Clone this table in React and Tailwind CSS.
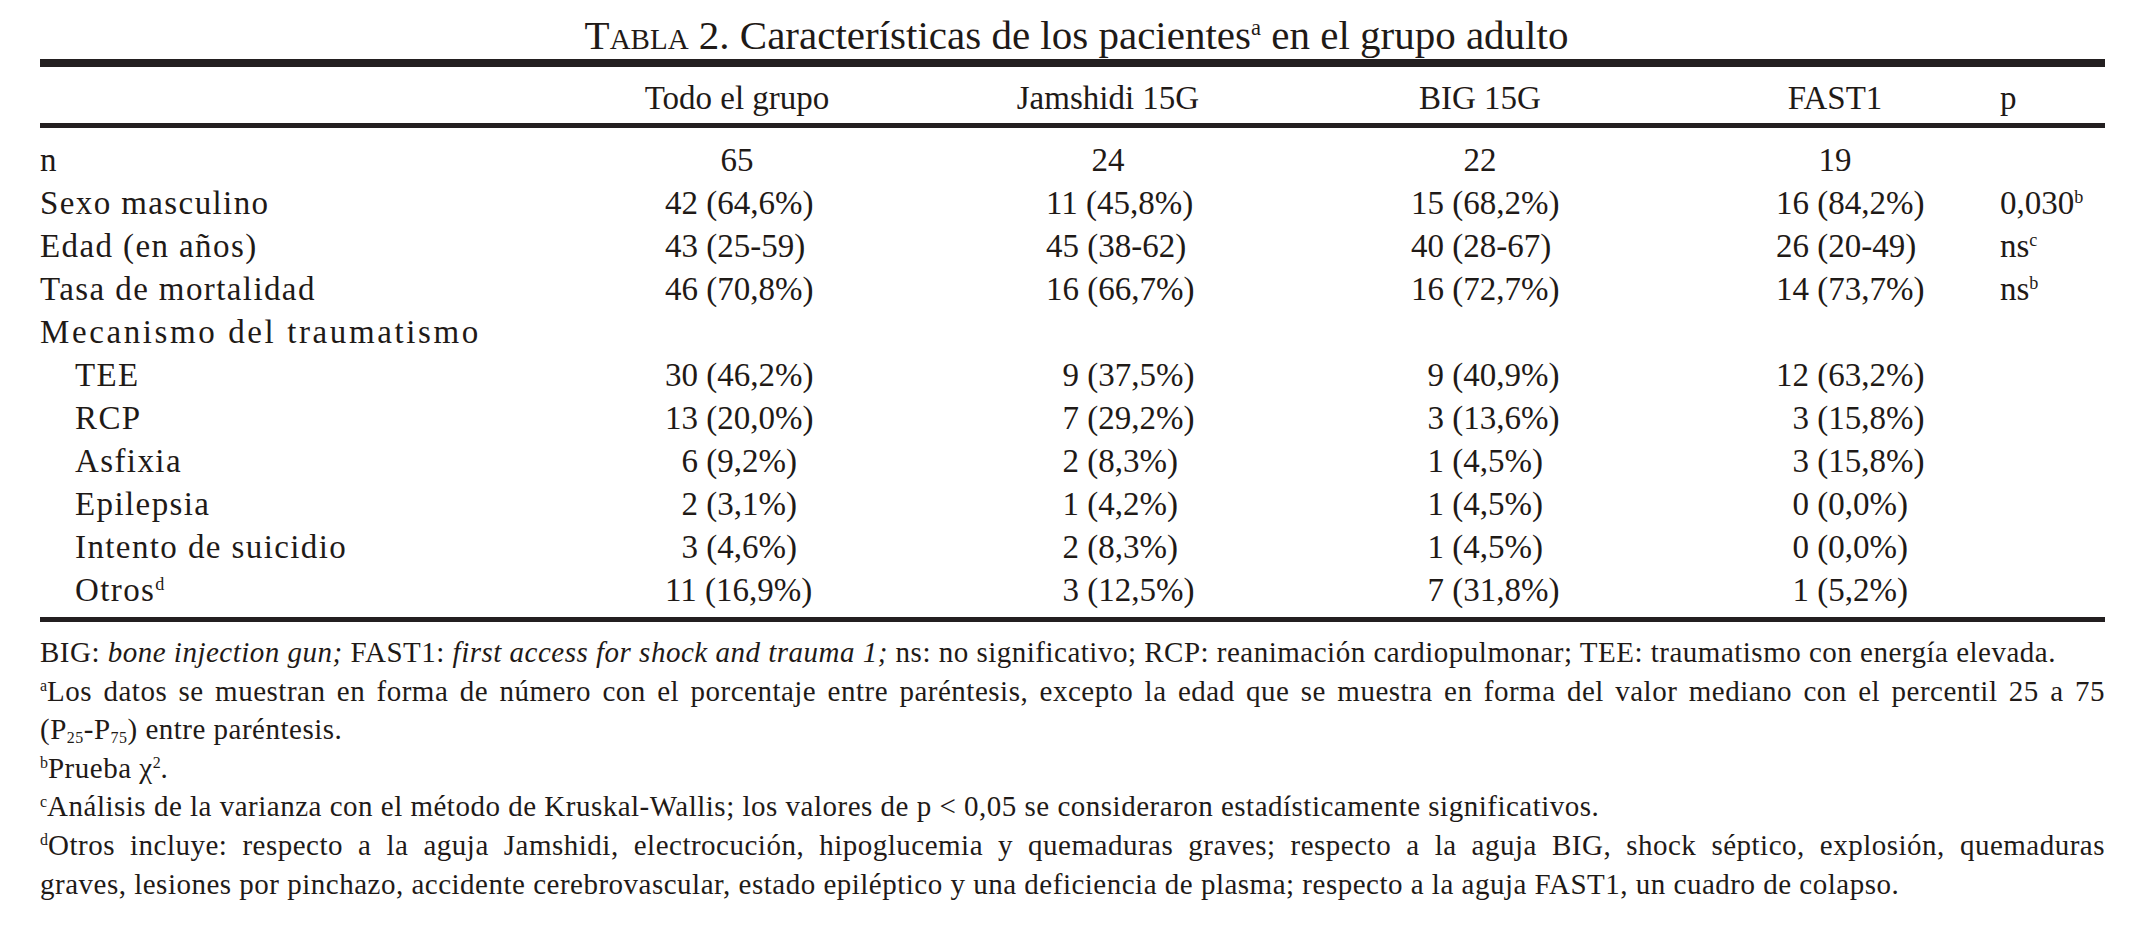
import React from "react";

const headCell = [
  "",
  "w-[234px] text-center",
  "w-[216px] text-center",
  "w-[220px] text-center",
  "w-[190px] text-center",
  "",
];

const dataCell = ["", "pl-[45px]", "pl-[46px]", "pl-[41px]", "pl-[36px]", ""];

const rows = [
  { label: "Sexo masculino", vals: ["42 (64,6%)", "11 (45,8%)", "15 (68,2%)", "16 (84,2%)"], p: "0,030", sup: "b" },
  { label: "Edad (en años)", vals: ["43 (25-59)", "45 (38-62)", "40 (28-67)", "26 (20-49)"], p: "ns", sup: "c" },
  { label: "Tasa de mortalidad", vals: ["46 (70,8%)", "16 (66,7%)", "16 (72,7%)", "14 (73,7%)"], p: "ns", sup: "b" },
  { label: "Mecanismo del traumatismo", wide: true, vals: [] },
  { label: "TEE", sub: true, vals: ["30 (46,2%)", "9 (37,5%)", "9 (40,9%)", "12 (63,2%)"] },
  { label: "RCP", sub: true, vals: ["13 (20,0%)", "7 (29,2%)", "3 (13,6%)", "3 (15,8%)"] },
  { label: "Asfixia", sub: true, vals: ["6 (9,2%)", "2 (8,3%)", "1 (4,5%)", "3 (15,8%)"] },
  { label: "Epilepsia", sub: true, vals: ["2 (3,1%)", "1 (4,2%)", "1 (4,5%)", "0 (0,0%)"] },
  { label: "Intento de suicidio", sub: true, vals: ["3 (4,6%)", "2 (8,3%)", "1 (4,5%)", "0 (0,0%)"] },
  { label: "Otros", labelSup: "d", sub: true, vals: ["11 (16,9%)", "3 (12,5%)", "7 (31,8%)", "1 (5,2%)"] },
];

const Sup = ({ children }) => (
  <sup className="text-[0.55em] -top-[0.6em] tracking-normal">{children}</sup>
);

// pad single-digit counts so the parentheses line up
const Value = ({ v }) => {
  const count = v.split(" ")[0];
  return (
    <span>
      {count.length === 1 && <span className="invisible">0</span>}
      {v}
    </span>
  );
};

const Rule = ({ className }) => <div className={`bg-[#231f20] ${className}`} />;

export default function App() {
  return (
    <div className="w-[2145px] h-[929px] bg-white px-[40px] pt-[13px] text-[#1f1a17] font-['Liberation_Serif',serif]">
      {/* Title */}
      <div className="text-center text-[41px] leading-[44px] pl-[8px]">
        T<span className="[font-variant:small-caps]">abla</span> 2. Características de los pacientes
        <Sup>a</Sup> en el grupo adulto
      </div>

      <Rule className="mt-[2px] h-[8px]" />

      {/* Header */}
      <div className="grid grid-cols-[580px_380px_370px_370px_260px_105px] h-[56px] items-center pt-[6px] text-[33px] leading-[40px]">
        <div />
        <div className={headCell[1]}>Todo el grupo</div>
        <div className={headCell[2]}>Jamshidi 15G</div>
        <div className={headCell[3]}>BIG 15G</div>
        <div className={headCell[4]}>FAST1</div>
        <div>p</div>
      </div>

      <Rule className="h-[5px]" />

      {/* Body */}
      <div className="pt-[11px] text-[33px] leading-[43px]">
        <div className="grid grid-cols-[580px_380px_370px_370px_260px_105px] h-[43px] items-center">
          <div>n</div>
          <div className={headCell[1]}>65</div>
          <div className={headCell[2]}>24</div>
          <div className={headCell[3]}>22</div>
          <div className={headCell[4]}>19</div>
          <div />
        </div>
        {rows.map((r) => (
          <div
            key={r.label}
            className="grid grid-cols-[580px_380px_370px_370px_260px_105px] h-[43px] items-center"
          >
            <div
              className={`whitespace-nowrap ${r.wide ? "tracking-[2.6px]" : "tracking-[1.4px]"} ${
                r.sub ? "pl-[35px]" : ""
              }`}
            >
              {r.label}
              {r.labelSup && <Sup>{r.labelSup}</Sup>}
            </div>
            {[0, 1, 2, 3].map((i) => (
              <div key={i} className={`whitespace-nowrap ${dataCell[i + 1]}`}>
                {r.vals[i] && <Value v={r.vals[i]} />}
              </div>
            ))}
            <div className="whitespace-nowrap">
              {r.p}
              {r.sup && <Sup>{r.sup}</Sup>}
            </div>
          </div>
        ))}
      </div>

      <Rule className="mt-[5px] h-[5px]" />

      {/* Footnotes */}
      <div className="pt-[11px] text-[29px] leading-[38.6px] tracking-[0.5px]">
        <div>
          BIG: <em className="italic">bone injection gun;</em> FAST1:{" "}
          <em className="italic">first access for shock and trauma 1;</em> ns: no significativo; RCP: reanimación
          cardiopulmonar; TEE: traumatismo con energía elevada.
        </div>
        <div className="text-justify [text-align-last:justify]">
          <Sup>a</Sup>Los datos se muestran en forma de número con el porcentaje entre paréntesis, excepto la edad que
          se muestra en forma del valor mediano con el percentil 25 a 75
        </div>
        <div>
          (P<sub className="text-[0.55em]">25</sub>-P<sub className="text-[0.55em]">75</sub>) entre paréntesis.
        </div>
        <div>
          <Sup>b</Sup>Prueba χ<Sup>2</Sup>.
        </div>
        <div>
          <Sup>c</Sup>Análisis de la varianza con el método de Kruskal-Wallis; los valores de p &lt; 0,05 se
          consideraron estadísticamente significativos.
        </div>
        <div className="text-justify [text-align-last:justify]">
          <Sup>d</Sup>Otros incluye: respecto a la aguja Jamshidi, electrocución, hipoglucemia y quemaduras graves;
          respecto a la aguja BIG, shock séptico, explosión, quemaduras
        </div>
        <div>
          graves, lesiones por pinchazo, accidente cerebrovascular, estado epiléptico y una deficiencia de plasma;
          respecto a la aguja FAST1, un cuadro de colapso.
        </div>
      </div>
    </div>
  );
}
